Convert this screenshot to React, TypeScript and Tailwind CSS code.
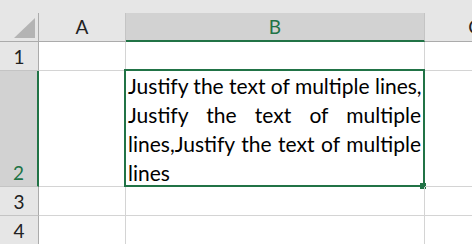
import React from "react";

const GREEN = "#217346";

const lines = [
  "Justify the text of multiple lines,",
  "Justify the text of multiple",
  "lines,Justify the text of multiple",
];

function Corner() {
  return (
    <div className="w-[39px] h-full flex items-end justify-end pr-[3px] pb-[3px] border-r border-[#ababab]">
      <svg width="21" height="20" viewBox="0 0 21 20">
        <polygon points="21,0 21,20 0,20" fill="#b4b4b4" />
      </svg>
    </div>
  );
}

function RowHead({ n, selected }: { n: number; selected?: boolean }) {
  return (
    <div
      className={`w-[39px] shrink-0 h-full flex flex-col justify-end border-b border-[#c4c4c4] ${
        selected
          ? "bg-[#d2d2d2] border-r-2 border-r-[#217346] text-[#217346]"
          : "bg-[#e6e6e6] border-r border-r-[#ababab] text-[#222]"
      }`}
    >
      <div className="h-[28px] flex items-center justify-center text-[19px] leading-none">{n}</div>
    </div>
  );
}

function Cell({ w, children }: { w: string; children?: React.ReactNode }) {
  return <div className={`${w} shrink-0 h-full border-r border-b border-[#d4d4d4] relative`}>{children}</div>;
}

export default function App() {
  return (
    <div className="w-[472px] h-[244px] overflow-hidden bg-white font-['Lato',sans-serif]">
      <div className="h-[13px] bg-[#e6e6e6]" />

      {/* column headers */}
      <div className="flex h-[29px] bg-[#e6e6e6]">
        <div className="shrink-0 border-b border-[#ababab] h-full">
          <Corner />
        </div>
        <div className="w-[87px] shrink-0 h-full border-r border-b border-r-[#c4c4c4] border-b-[#ababab] flex items-center justify-center text-[19px] text-[#222]">
          A
        </div>
        <div className="w-[299px] shrink-0 h-full bg-[#d2d2d2] border-r border-r-[#c4c4c4] border-b-2 border-b-[#217346] flex items-center justify-center text-[19px] text-[#217346] pt-[2px]">
          B
        </div>
        <div className="w-[99px] shrink-0 h-full border-b border-[#ababab] flex items-center justify-center text-[19px] text-[#222]">
          C
        </div>
      </div>

      {/* row 1 */}
      <div className="flex h-[29px]">
        <RowHead n={1} />
        <Cell w="w-[87px]" />
        <Cell w="w-[299px]" />
        <Cell w="w-[99px]" />
      </div>

      {/* row 2 */}
      <div className="flex h-[116px]">
        <RowHead n={2} selected />
        <Cell w="w-[87px]" />
        <Cell w="w-[299px]">
          <div className="pl-[2px] pr-[3px] text-[21px] leading-[29px] text-black text-justify">
            {lines.map((l) => (
              <div key={l} className="[text-align-last:justify] whitespace-nowrap">
                {l}
              </div>
            ))}
            <div>lines</div>
          </div>
          <div className="absolute -left-[2px] -top-[2px] w-[301px] h-[118px] border-2" style={{ borderColor: GREEN }} />
          <div className="absolute left-[294px] top-[112px] w-[6px] h-[6px] bg-[#217346]" />
        </Cell>
        <Cell w="w-[99px]" />
      </div>

      {/* rows 3-4 */}
      {[3, 4].map((n) => (
        <div key={n} className="flex h-[29px]">
          <RowHead n={n} />
          <Cell w="w-[87px]" />
          <Cell w="w-[299px]" />
          <Cell w="w-[99px]" />
        </div>
      ))}
    </div>
  );
}
